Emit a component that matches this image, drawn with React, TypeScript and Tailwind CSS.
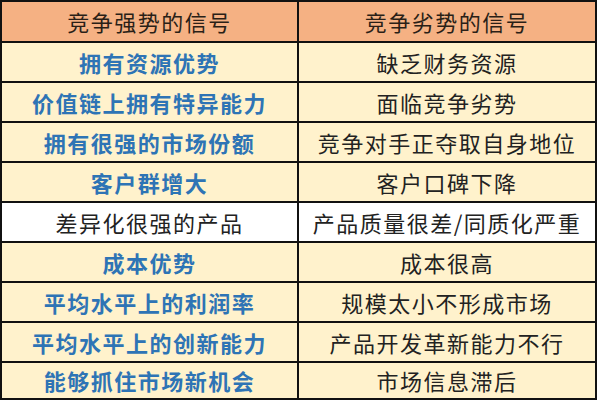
import React from "react";

const rows: { l: string; r: string; white?: boolean; plain?: boolean }[] = [
  { l: "拥有资源优势", r: "缺乏财务资源" },
  { l: "价值链上拥有特异能力", r: "面临竞争劣势" },
  { l: "拥有很强的市场份额", r: "竞争对手正夺取自身地位" },
  { l: "客户群增大", r: "客户口碑下降" },
  { l: "差异化很强的产品", r: "产品质量很差/同质化严重", white: true, plain: true },
  { l: "成本优势", r: "成本很高" },
  { l: "平均水平上的利润率", r: "规模太小不形成市场" },
  { l: "平均水平上的创新能力", r: "产品开发革新能力不行" },
  { l: "能够抓住市场新机会", r: "市场信息滞后" },
];

export default function App() {
  return (
    <div
      className="w-[600px] h-[401px] bg-white"
      style={{ fontFamily: '"Noto Sans CJK SC", "Noto Sans", sans-serif' }}
    >
      <div className="w-[597px] border-2 border-[#111] flex flex-col">
        <div className="flex h-[41px] border-b-2 border-[#111] bg-[#F5B183]">
          <div className="w-[297px] border-r-2 border-[#111] flex items-center justify-center text-[22px] tracking-[1.5px] text-[#2a1f17]">
            竞争强势的信号
          </div>
          <div className="flex-1 flex items-center justify-center text-[22px] tracking-[1.5px] text-[#2a1f17]">
            竞争劣势的信号
          </div>
        </div>
        {rows.map((row, i) => {
          const last = i === rows.length - 1;
          return (
            <div
              key={i}
              className={
                (last ? "h-[35px] " : "h-[40px] border-b-2 border-[#111] ") +
                (row.white ? "bg-white " : "bg-[#FFF2CC] ") +
                "flex"
              }
            >
              <div
                className={
                  "w-[297px] border-r-2 border-[#111] flex items-center justify-center text-[22px] tracking-[1.5px] " +
                  (row.plain ? "text-[#222] font-normal" : "text-[#2E74B5] font-bold")
                }
              >
                {row.l}
              </div>
              <div className="flex-1 flex items-center justify-center text-[22px] tracking-[1.5px] text-[#222]">
                {row.r}
              </div>
            </div>
          );
        })}
      </div>
    </div>
  );
}
